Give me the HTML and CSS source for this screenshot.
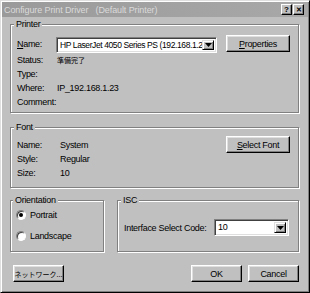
FILE: index.html
```html
<!DOCTYPE html>
<html lang="ja">
    <head>
        <meta charset="UTF-8">
        <title>Configure Print Driver</title>
        <link rel="stylesheet" href="styles.css">
    </head>
    <body>
        <div class="window">
            <div class="titlebar">
                <span class="title">Configure Print Driver&nbsp;&nbsp;&nbsp;(Default Printer)</span>
                <div class="caption-btns">
                    <span class="cbtn">?</span>
                    <span class="cbtn close">&#x2715;</span>
                </div>
            </div>

            <div class="content">
                <!-- printer -->
                <fieldset class="group printer">
                    <legend>Printer</legend>
                    <div class="name-row">
                        <span class="lbl name-lbl"><u>N</u>ame:</span>
                        <div class="combo printer-combo">
                            <span class="combo-text narrow">HP LaserJet 4050 Series PS (192.168.1.23)</span>
                            <span class="drop"><svg width="7" height="4" viewBox="0 0 7 4"><path d="M0 0h7L3.5 4z" fill="#000"/></svg></span>
                        </div>
                        <span class="btn props"><u>P</u>roperties</span>
                    </div>
                    <div class="info-row"><span class="lbl">Status:</span><span class="jp">準備完了</span></div>
                    <div class="info-row"><span class="lbl">Type:</span><span></span></div>
                    <div class="info-row"><span class="lbl">Where:</span><span>IP_192.168.1.23</span></div>
                    <div class="info-row"><span class="lbl">Comment:</span><span></span></div>
                </fieldset>

                <!-- font -->
                <fieldset class="group font">
                    <legend>Font</legend>
                    <div class="font-body">
                        <div class="font-info">
                            <div class="info-row"><span class="lbl font-lbl">Name:</span><span>System</span></div>
                            <div class="info-row"><span class="lbl font-lbl">Style:</span><span>Regular</span></div>
                            <div class="info-row"><span class="lbl font-lbl">Size:</span><span>10</span></div>
                        </div>
                        <span class="btn select-font"><u>S</u>elect Font</span>
                    </div>
                </fieldset>

                <div class="split">
                    <fieldset class="group orient">
                        <legend>Orientation</legend>
                        <div class="radio-row"><span class="radio checked"></span><span>Portrait</span></div>
                        <div class="radio-row"><span class="radio"></span><span>Landscape</span></div>
                    </fieldset>
                    <fieldset class="group isc">
                        <legend>ISC</legend>
                        <div class="isc-row">
                            <span class="isc-lbl">Interface Select Code:</span>
                            <div class="combo isc-combo">
                                <span class="combo-text">10</span>
                                <span class="drop"><svg width="7" height="4" viewBox="0 0 7 4"><path d="M0 0h7L3.5 4z" fill="#000"/></svg></span>
                            </div>
                        </div>
                    </fieldset>
                </div>

                <div class="actions">
                    <span class="btn network jp">ネットワーク...</span>
                    <div class="right-btns">
                        <span class="btn ok">OK</span>
                        <span class="btn cancel">Cancel</span>
                    </div>
                </div>
            </div>
        </div>
    </body>
</html>
```

FILE: styles.css
```css
* {
    box-sizing: border-box;
}

body {
    margin: 0;
    background-color: #c0c0c0;
    font-family: "Liberation Sans", Arial, "Noto Sans CJK JP", sans-serif;
    font-size: 9px;
    letter-spacing: -0.3px;
    color: #000;
}

.window {
    width: 310px;
    height: 293px;
    padding: 1px;
    background-color: #c0c0c0;
    border: 1px solid;
    border-color: #dfdfdf #000 #000 #dfdfdf;
    box-shadow: inset 1px 1px #fff, inset -1px -1px #808080;
}

.titlebar {
    height: 15px;
    display: flex;
    align-items: center;
    justify-content: space-between;
    padding-left: 2px;
    background: linear-gradient(to right, #9a9a9a, #a8a8a8);
}

.title {
    color: #dadada;
    letter-spacing: -0.1px;
    white-space: nowrap;
}

.caption-btns {
    display: flex;
    gap: 1px;
    margin-right: 4px;
}

.cbtn {
    width: 11px;
    height: 11px;
    display: flex;
    align-items: center;
    justify-content: center;
    font-size: 8px;
    font-weight: bold;
    letter-spacing: 0;
    background-color: #c0c0c0;
    border: 1px solid;
    border-color: #fff #000 #000 #fff;
    box-shadow: inset -1px -1px #808080;
}

.close {
    font-size: 7px;
}

.content {
    padding: 1px 9px 0 8px;
}

/* etched group box */
.group {
    margin: 0;
    min-width: 0;
    border: 1px solid #808080;
    box-shadow: inset 1px 1px #fff, 1px 1px #fff;
    padding: 4px 8px 3px 6px;
}

legend {
    line-height: 13px;
    padding: 0 2px;
    margin-left: -3px;
    background-color: #c0c0c0;
}

.name-row {
    display: flex;
    align-items: flex-start;
    height: 18px;
}

.lbl {
    width: 40px;
    flex-shrink: 0;
}

.name-lbl {
    width: 39px;
    line-height: 18px;
}

.info-row {
    display: flex;
    height: 14px;
    align-items: center;
}

.jp {
    font-family: "Noto Sans CJK JP", sans-serif;
    font-size: 7px;
    letter-spacing: 0;
}

/* sunken combo box */
.combo {
    display: flex;
    align-items: stretch;
    background-color: #fff;
    border: 1px solid;
    border-color: #808080 #fff #fff #808080;
    box-shadow: inset 1px 1px #404040, inset -1px -1px #dfdfdf;
    padding: 2px;
}

.combo-text {
    flex: 1;
    overflow: hidden;
    white-space: nowrap;
    padding-left: 1px;
    line-height: 10px;
}

.narrow {
    font-size: 8.5px;
    letter-spacing: -0.4px;
}

.drop {
    width: 12px;
    display: flex;
    align-items: center;
    justify-content: center;
    background-color: #c0c0c0;
    border: 1px solid;
    border-color: #dfdfdf #000 #000 #dfdfdf;
    box-shadow: inset 1px 1px #fff, inset -1px -1px #808080;
}

.printer-combo {
    width: 161px;
    height: 16px;
    margin-top: 2px;
}

.btn {
    display: flex;
    align-items: center;
    justify-content: center;
    height: 17px;
    background-color: #c0c0c0;
    border: 1px solid;
    border-color: #fff #000 #000 #fff;
    box-shadow: inset -1px -1px #808080, inset 1px 1px #dfdfdf;
    white-space: nowrap;
}

.props,
.select-font {
    width: 64px;
    margin-left: auto;
}

.font {
    margin-top: 8px;
    padding-top: 2px;
    padding-bottom: 7px;
}

.font-body {
    display: flex;
    align-items: flex-start;
}

.font-info {
    padding-top: 2px;
}

.font-lbl {
    width: 43px;
}

.split {
    display: flex;
    gap: 13px;
    margin-top: 6px;
}

.orient {
    width: 94px;
    padding: 1px 4px 8px 5px;
}

.radio-row {
    display: flex;
    align-items: center;
    gap: 4px;
    height: 14px;
}

.radio-row + .radio-row {
    margin-top: 7px;
}

.radio {
    width: 10px;
    height: 10px;
    border-radius: 50%;
    background-color: #fff;
    border: 1px solid;
    border-color: #808080 #fff #fff #808080;
    box-shadow: inset 1px 1px #404040;
    display: flex;
    align-items: center;
    justify-content: center;
}

.radio.checked::after {
    content: "";
    width: 4px;
    height: 4px;
    border-radius: 50%;
    background-color: #000;
}

.isc {
    flex: 1;
    padding: 12px 8px 8px 6px;
}

.isc-row {
    display: flex;
    align-items: center;
}

.isc-lbl {
    width: 90px;
}

.isc-combo {
    width: 75px;
    height: 17px;
}

.actions {
    display: flex;
    justify-content: space-between;
    margin-top: 13px;
    padding-left: 3px;
}

.network {
    width: 51px;
    font-size: 7px;
}

.right-btns {
    display: flex;
    gap: 6px;
}

.ok,
.cancel {
    width: 51px;
}
```
